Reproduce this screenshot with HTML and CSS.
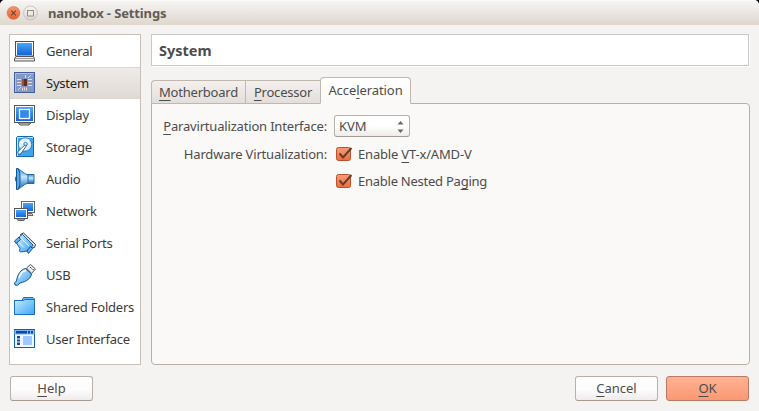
FILE: index.html
```html
<!DOCTYPE html>
<html lang="en">
<head>
<meta charset="utf-8">
<title>nanobox - Settings</title>
<link rel="stylesheet" href="styles.css">
</head>
<body>
<div class="window">
  <header class="titlebar">
    <svg class="controls" width="34" height="16" viewBox="0 0 34 16">
      <defs>
        <linearGradient id="close" x1="0" y1="0" x2="0" y2="1"><stop offset="0" stop-color="#f9946c"/><stop offset="1" stop-color="#e4602f"/></linearGradient>
        <linearGradient id="max" x1="0" y1="0" x2="0" y2="1"><stop offset="0" stop-color="#f8f6f4"/><stop offset="1" stop-color="#dcd6cf"/></linearGradient>
      </defs>
      <circle cx="8.500" cy="8" r="7.2" fill="#ddd6cf"/>
      <circle cx="8.500" cy="8" r="6.3" fill="url(#close)" stroke="#d9794f" stroke-width=".7"/>
      <path d="M6.200 5.700l4.600 4.600M10.800 5.700l-4.600 4.600" stroke="#69432f" stroke-width="1.1"/>
      <circle cx="25.500" cy="8" r="6.9" fill="url(#max)" stroke="#c2bab2" stroke-width=".8"/>
      <rect x="22.500" y="5.500" width="6" height="5.500" fill="#eeeae6" stroke="#958d85"/>
    </svg>
    <h1 class="title">nanobox - Settings</h1>
  </header>

  <div class="content">
    <nav class="sidebar">
      <a class="item">
        <svg class="icon" viewBox="0 0 24 24">
          <defs><linearGradient id="blue" x1="0" y1="0" x2="0" y2="1"><stop offset="0" stop-color="#45a5fa"/><stop offset="1" stop-color="#1566d8"/></linearGradient>
          <linearGradient id="sky" x1="0" y1="0" x2="1" y2="1"><stop offset="0" stop-color="#d9f0ff"/><stop offset="1" stop-color="#3b9eea"/></linearGradient></defs>
          <rect x="2.500" y="2.500" width="18" height="14.500" fill="#fff" stroke="#4d4d4d"/>
          <rect x="4" y="4" width="15" height="12" fill="url(#blue)"/>
          <path d="M3 17.500h17.500l1 2v2.500H1.500v-2.500z" fill="#eee" stroke="#555"/>
          <path d="M2 19.500h19.500" stroke="#999"/>
        </svg>
        <span>General</span></a>
      <a class="item selected">
        <svg class="icon" viewBox="0 0 24 24">
          <rect x="1.500" y="1.500" width="20" height="20" fill="#8299c5" stroke="#3f5da3"/>
          <path d="M2.500 21V2.500H21" fill="none" stroke="#b0bfdd"/>
          <rect x="9" y="8" width="5" height="7" fill="#5e3020"/><rect x="9" y="8" width="2" height="7" fill="#8e5545"/>
          <path d="M4 8.500h4M4 11.500h4M4 14.500h4M15 8.500h4M15 11.500h4M15 14.500h4M9.500 16.500v3M11.500 16.500v3M13.500 16.500v3M12.500 4v3M15 7l3-3M5 19l3-3" stroke="#f5d5cb"/>
        </svg>
        <span>System</span></a>
      <a class="item">
        <svg class="icon" viewBox="0 0 24 24">
          <rect x="1.500" y="2.500" width="20" height="17" fill="#fff" stroke="#555"/>
          <rect x="3" y="4" width="17" height="14" fill="url(#blue)"/>
          <rect x="6.500" y="6.500" width="10" height="9" fill="#3288ef" stroke="#fff" stroke-width="1.300"/>
          <path d="M5.500 20h12l-1.500 2h-9z" fill="#ddd" stroke="#555"/>
        </svg>
        <span>Display</span></a>
      <a class="item">
        <svg class="icon" viewBox="0 0 24 24">
          <path d="M4.500 1.500h15l1 1v19h-17V2.500z" fill="#3fa4ee" stroke="#1566ad"/>
          <path d="M4.500 21V2.500H20" fill="none" stroke="#c5e6fc"/>
          <circle cx="12" cy="9.500" r="6.700" fill="#d9effc" stroke="#1c69ac" stroke-width=".8"/>
          <path d="M12 9.500L16 4.500M12 9.500l-5-3" stroke="#fff" stroke-width="2"/><circle cx="12.500" cy="9" r="1.700" fill="#fff" stroke="#2874b5"/>
          <path d="M13.500 10.500l-5.500 8-2.500 1-.8-2.500 1.800-2 5.500-5z" fill="#fff" stroke="#255b91" stroke-width=".9"/>
        </svg>
        <span>Storage</span></a>
      <a class="item">
        <svg class="icon" viewBox="0 0 24 24">
          <defs><linearGradient id="horn" x1="0" y1="0" x2="0" y2="1"><stop offset="0" stop-color="#3b97dc"/><stop offset=".4" stop-color="#c4e8ff"/><stop offset="1" stop-color="#0f61ac"/></linearGradient></defs>
          <path d="M14 7.500h7v9h-7z" fill="url(#horn)" stroke="#286b9f"/>
          <path d="M4.500 1.500c3 1 5 4.500 10.500 6.500v8c-5.500 2-7.500 5.500-10.500 6.500z" fill="url(#horn)" stroke="#286b9f"/>
          <path d="M3.500 1.500h1.500c2 3 2 6.500 2 10.500s0 7.500-2 10.500H3.500z" fill="#58aae5" stroke="#12548f"/>
          <path d="M3 9.500q-1.500 2.500 0 5" fill="#78c4fb" stroke="#286b9f"/>
        </svg>
        <span>Audio</span></a>
      <a class="item">
        <svg class="icon" viewBox="0 0 24 24">
          <path d="M11 14.500h8l1 2h-9z" fill="#ccc" stroke="#666"/>
          <rect x="8.500" y="2.500" width="13" height="11" fill="#fff" stroke="#666"/><rect x="10" y="4" width="10" height="8" fill="url(#blue)"/>
          <path d="M4 20h8l-1 1.500H5z" fill="#ccc" stroke="#666"/>
          <rect x="1.500" y="9.500" width="13" height="10" fill="#fff" stroke="#555"/><rect x="3" y="11" width="10" height="7" fill="url(#blue)"/>
        </svg>
        <span>Network</span></a>
      <a class="item">
        <svg class="icon" viewBox="0 0 24 24">
          <path d="M7.500 3.500l3-1.500L22.500 13.500l-1 3-3 .5z" fill="#eee" stroke="#333"/>
          <path d="M9.500 3.500l10.500 11" stroke="#333" stroke-dasharray="1 1"/>
          <path d="M6.500 5.500l3-2L20 14l-2 3-4 3-6.500 1-1-1 .5-2.500L3.500 12z" fill="url(#sky)" stroke="#0d5eac"/>
          <path d="M8 7l8 8M6 11.500l5 5" stroke="#eaf8ff"/>
          <path d="M6 6l-4.500 4 1.500 2.500 4.500-4zM17.500 15.500L14 20l1.500 2.500 4-5z" fill="#65b8f4" stroke="#094f99"/>
        </svg>
        <span>Serial Ports</span></a>
      <a class="item">
        <svg class="icon" viewBox="0 0 24 24">
          <path d="M13.500 5L17.500 1.500l5 4.500-4 4.500z" fill="#eee" stroke="#555"/><path d="M17 4l1.500 1.500M19.500 6l1 1" stroke="#333"/>
          <path d="M12.500 5.500l6 5.500c-.5 4-4.500 7.500-11.500 9l-2.500 2.300-2.500-.3-.5-2 2-2C4.500 11 8 6.500 12.500 5.500z" fill="url(#sky)" stroke="#075394"/>
          <path d="M6 15c1-4 4-7 7-7.500" fill="none" stroke="#f3fcff" stroke-width="1.500"/>
        </svg>
        <span>USB</span></a>
      <a class="item">
        <svg class="icon" viewBox="0 0 24 24">
          <defs><linearGradient id="folder" x1="0" y1="0" x2="1" y2="1"><stop offset="0" stop-color="#c4ecff"/><stop offset="1" stop-color="#3ca6f4"/></linearGradient></defs>
          <path d="M1.500 19.500V5.500h7.500l1.500-3h9.500l1.500 1.500V19.500z" fill="#66bdf6" stroke="#1d6eb7"/>
          <path d="M1.500 5.500h9l1.500-1h9.500V19.500h-20z" fill="url(#folder)" stroke="#1d6eb7"/>
        </svg>
        <span>Shared Folders</span></a>
      <a class="item">
        <svg class="icon" viewBox="0 0 24 24">
          <rect x="1.500" y="2.500" width="20" height="18" fill="#f2f8ff" stroke="#145daf"/>
          <path d="M1.500 3h20v4.500h-20z" fill="#7bb5f3"/><path d="M3 4h11v2.500H3zM15 4h2v2.500h-2zM18 4h2v2.500h-2z" fill="#0c4aa0"/>
          <path d="M4 9h3v2.500H4zM4 12.500h3v2H4zM4 15.500h3V18H4z" fill="#104a98"/><path d="M10 9h9v9h-9z" fill="#9cc9ff"/>
        </svg>
        <span>User Interface</span></a>
    </nav>

    <main class="page">
      <h2 class="heading">System</h2>
      <div class="tabs">
        <div class="tab first"><span><u>M</u>otherboard</span></div>
        <div class="tab second"><span><u>P</u>rocessor</span></div>
        <div class="tab active"><span>Acce<u>l</u>eration</span></div>
      </div>
      <section class="panel">
        <div class="row">
          <label class="label"><span><u>P</u>aravirtualization Interface:</span></label>
          <div class="combo"><span>KVM</span>
            <svg width="7" height="14" viewBox="0 0 7 14"><path d="M.5 5.500l3-3.500 3 3.500zM.5 10.500l3 3.500 3-3.500z" fill="#6b6765"/></svg>
          </div>
        </div>
        <div class="row">
          <label class="label"><span>Hardware Virtualization:</span></label>
          <svg class="check" viewBox="0 0 17 16"><defs><linearGradient id="chk" x1="0" y1="0" x2="0" y2="1"><stop offset="0" stop-color="#f99c79"/><stop offset="1" stop-color="#ee6c3d"/></linearGradient></defs><rect x=".5" y="1.500" width="14" height="13" rx="2" fill="url(#chk)" stroke="#b4532f"/><path d="M3.500 7.500l3.500 4 8.500-9.500" fill="none" stroke="#653d2d" stroke-width="2"/></svg>
          <span>Enable <u>V</u>T-x/AMD-V</span>
        </div>
        <div class="row last">
          <span class="label"></span>
          <svg class="check" viewBox="0 0 17 16"><rect x=".5" y="1.500" width="14" height="13" rx="2" fill="url(#chk)" stroke="#b4532f"/><path d="M3.500 7.500l3.500 4 8.500-9.500" fill="none" stroke="#653d2d" stroke-width="2"/></svg>
          <span class="nested">Enable Nested Pa<u>g</u>ing</span>
        </div>
      </section>
    </main>
  </div>

  <footer class="buttons">
    <button class="button help"><u>H</u>elp</button>
    <button class="button"><u>C</u>ancel</button>
    <button class="button primary"><u>O</u>K</button>
  </footer>
</div>
</body>
</html>
```
FILE: styles.css
```css
* { box-sizing: border-box; }
body { margin: 0; background: #000; overflow: hidden; font: 13px/18px "Noto Sans", "Open Sans", sans-serif; color: #4c4c4c; }
h1, h2 { margin: 0; }
span { white-space: nowrap; }
u { text-decoration: underline; text-decoration-thickness: 1px; text-underline-offset: 3px; text-decoration-skip-ink: none; }
.window { display: flex; flex-direction: column; width: 759px; height: 411px; background: #f4f3f1; border-radius: 5px 5px 0 0; overflow: hidden; }
.titlebar { display: flex; align-items: center; gap: 9px; height: 25px; padding-left: 5px; background: linear-gradient(#f7f5f3, #eeebe8 30%, #dfd7ce); border-top: 1px solid #fbfaf9; }
.title { font-size: 13px; line-height: 20px; color: #625b56; letter-spacing: -.12px; }
.content { display: flex; gap: 10px; height: 340px; padding: 9px 9px 0; }
.sidebar { width: 132px; height: 331px; border: 1px solid #c8bfb6; background: #fff; }
.item { display: flex; align-items: center; gap: 9px; height: 32px; padding-left: 3px; color: #3c3c3c; letter-spacing: -.22px; }
.selected { background: linear-gradient(#efebe8, #e0dad4); border-top: 1px solid #dcd6d0; border-bottom: 1px solid #ddd7d1; color: #222; }
.icon { width: 24px; height: 24px; flex: none; }
.page { display: flex; flex-direction: column; width: 599px; height: 331px; }
.heading { width: 598px; height: 32px; border: 1px solid #c8c8c8; box-shadow: 1px 1px #fff; background: #fff; padding-left: 7px; font-size: 14.5px; line-height: 31px; }
.tabs { display: flex; align-items: flex-end; height: 38px; margin-bottom: -1px; z-index: 1; letter-spacing: -.22px; }
.tab { display: flex; justify-content: center; align-items: center; height: 24px; padding-bottom: 1px; border: 1px solid #c0b7ae; background: linear-gradient(#f3f0ee, #e3deda); border-radius: 4px 0 0; }
.first { width: 94px; border-right: 0; }
.second { width: 75px; border-right: 0; border-radius: 0; }
.active { width: 91px; height: 27px; padding-bottom: 1px; background: linear-gradient(#fff, #faf9f7); border-bottom-color: #faf9f7; border-radius: 4px 4px 0 0; letter-spacing: -.08px; }
.panel { flex: 1; border: 1px solid #b9afa5; border-radius: 0 4px 4px 4px; background: #faf9f7; padding-top: 8px; letter-spacing: -.18px; }
.row { display: flex; align-items: center; height: 28px; margin-bottom: -1px; }
.row + .row { margin-bottom: 0; margin-top: 1px; }
.row.last { margin-top: -1px; }
.label { width: 175px; margin-right: 7px; text-align: right; display: flex; justify-content: flex-end; }
.nested { letter-spacing: -.25px; }
.combo { display: flex; align-items: center; justify-content: space-between; width: 76px; height: 22px; padding: 0 5px 0 4px; border: 1px solid #b8b1aa; border-bottom-color: #a49c95; border-radius: 3px; background: linear-gradient(#fff, #fff 50%, #eeecea); letter-spacing: 0; }
.check { width: 17px; height: 16px; margin-left: 2px; margin-right: 5px; flex: none; }
.buttons { display: flex; gap: 8px; padding: 11px 10px 0; }
.button { width: 83px; height: 25px; padding: 0 0 1px; border: 1px solid #b9b0a7; border-bottom-color: #a59b92; border-radius: 3px; background: linear-gradient(#fff, #fdfcfc 55%, #efeceb); font: inherit; color: inherit; }
.help { margin-right: auto; }
.primary { border-color: #b77a62; background: linear-gradient(#ffb294, #fb9872); }
```
